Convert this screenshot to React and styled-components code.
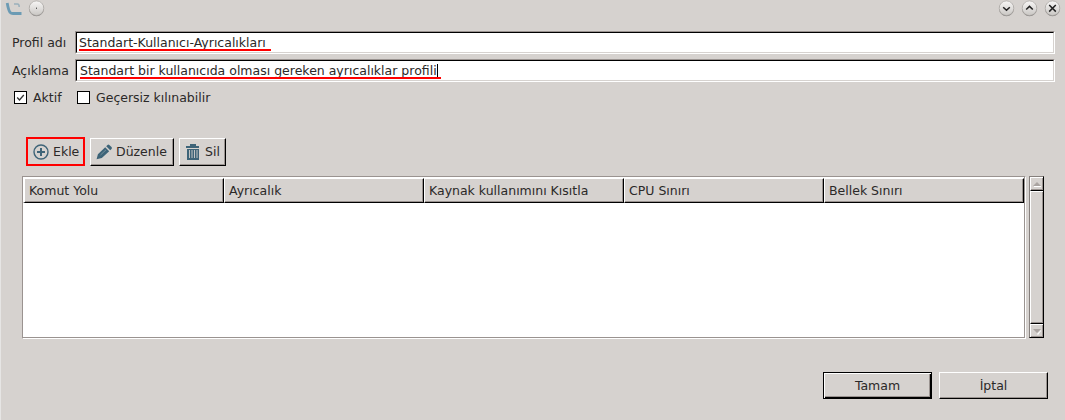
import React from "react";
import styled, { createGlobalStyle, css } from "styled-components";

const GlobalStyle = createGlobalStyle`
  * { box-sizing: border-box; }
  body { margin: 0; background: #d6d2cf; }
`;

const face = "#d6d2cf";
const shade = "#9a9390";

const Dialog = styled.main`
  width: 1065px;
  height: 420px;
  overflow: hidden;
  background: ${face};
  border-left: 1px solid #e6e5e4;
  font: 12.5px/16px "DejaVu Sans", sans-serif;
  color: #2b2928;
  white-space: nowrap;
`;

const TitleBar = styled.header`
  display: flex;
  align-items: flex-start;
  height: 31px;
  padding: 0 3px 0 4px;
`;

const Logo = styled.svg`
  width: 20px;
  height: 18px;
  margin-right: 3px;
`;

const Controls = styled.div`
  display: flex;
  gap: 5px;
  margin-left: auto;
`;

const RoundIcon = styled.svg`
  width: 18px;
  height: 18px;
`;

const Field = styled.label`
  display: flex;
  height: 23px;
  margin-bottom: 5px;
  padding: 0 10px 0 11px;
`;

const FieldName = styled.span`
  width: 63px;
  padding-top: 4px;
`;

const Input = styled.span`
  flex: 1;
  border: 1px solid;
  border-color: ${shade} #fff #fff ${shade};
  background: #fff;
`;

const InputInner = styled.span`
  display: block;
  height: 21px;
  padding: 2px 0 0 ${(p) => p.$indent}px;
  border: 1px solid;
  border-color: #000 ${face} ${face} #000;
`;

const Marked = styled.span`
  display: block;
  position: relative;
  width: max-content;
  height: 16px;
  &::after {
    content: "";
    position: absolute;
    left: 0;
    top: 14px;
    width: ${(p) => p.$length}px;
    height: 2px;
    background: #f00;
  }
`;

const Caret = styled.i`
  position: absolute;
  left: 357px;
  top: 1px;
  width: 1px;
  height: 14px;
  background: #000;
`;

const Options = styled.div`
  display: flex;
  align-items: center;
  height: 20px;
  padding-left: 13px;
`;

const Option = styled.label`
  display: flex;
  align-items: center;
  width: ${(p) => p.$width}px;
  gap: 6px;
  padding-top: 1px;
`;

const Box = styled.span`
  display: flex;
  width: 13px;
  height: 13px;
  margin-top: -1px;
  border: 1px solid #000;
  background: #fff;
`;

const raised = css`
  border: 1px solid;
  border-color: #fff #000 #000 #fff;
  box-shadow: inset -1px -1px ${shade};
  background: ${face};
`;

const Toolbar = styled.div`
  display: flex;
  gap: 5px;
  height: 29px;
  margin: 30px 0 10px 25px;
`;

const ToolButton = styled.button`
  ${raised}
  display: flex;
  align-items: center;
  width: ${(p) => p.$width}px;
  height: 28px;
  margin-top: 1px;
  padding: 0 0 0 5px;
  font: inherit;
  color: inherit;
  ${(p) =>
    p.$highlight &&
    css`
      height: 29px;
      margin-top: 0;
      border: 2px solid #f00;
      box-shadow: none;
    `}
  svg { width: 16px; height: 16px; margin-right: 4px; flex: none; }
`;

const Content = styled.div`
  display: flex;
  gap: 3px;
  height: 163px;
  padding-left: 21px;
`;

const Table = styled.section`
  width: 1004px;
  border: 1px solid;
  border-color: ${shade} #fff #fff ${shade};
  background: #fff;
`;

const TableInner = styled.div`
  height: 161px;
  padding-top: 1px;
  border-right: 1px solid ${shade};
  border-bottom: 1px solid ${shade};
`;

const HeaderRow = styled.div`
  display: grid;
  grid-template-columns: 201px repeat(4, 200px);
`;

const HeaderCell = styled.div`
  ${raised}
  height: 25px;
  padding: 4px 0 0 4px;
  &:first-child { border-left-width: 2px; }
`;

const ScrollBar = styled.div`
  display: flex;
  flex-direction: column;
  width: 15px;
  height: 162px;
  border: 1px solid;
  border-color: #857f7c #000 #000 #857f7c;
`;

const ScrollPart = styled.div`
  flex: ${(p) => (p.$thumb ? "1" : "0 0 14px")};
  border: solid;
  border-width: 1px 0 1px 1px;
  border-color: #fff #000 #000 #fff;
  box-shadow: inset -1px -1px ${shade};
  &:last-child { flex-basis: 13px; border-bottom: 0; }
  svg { display: block; width: 12px; height: 12px; }
`;

const Footer = styled.footer`
  display: flex;
  justify-content: flex-end;
  gap: 7px;
  padding: 33px 17px 0 0;
`;

const DialogButton = styled.button`
  ${raised}
  width: 109px;
  height: 27px;
  padding: 0;
  font: inherit;
  color: inherit;
  ${(p) =>
    p.$primary &&
    css`
      border-color: #000;
      box-shadow: inset 1px 1px #fff, inset -1px -1px #000, inset -2px -2px ${shade};
    `}
`;

function RoundButton({ children, id }) {
  return (
    <RoundIcon viewBox="0.5 0 18 18">
      <defs>
        <linearGradient id={id} x2="0" y2="1">
          <stop stopColor="#f8f7f6" />
          <stop offset="1" stopColor="#c9c6c3" />
        </linearGradient>
      </defs>
      <circle cx="9" cy="8.8" r="7.4" fill="#8d8987" />
      <circle cx="9" cy="8.2" r="7.3" fill={`url(#${id})`} stroke="#a6a3a0" strokeWidth=".6" />
      <g fill="none" stroke="#222" strokeWidth="1.5">{children}</g>
    </RoundIcon>
  );
}

const AddIcon = () => (
  <svg viewBox="0 0 16 16" fill="none" stroke="#3e6478">
    <circle cx="8" cy="8" r="7" strokeWidth="1.4" />
    <path d="M8 4v8M4 8h8" strokeWidth="2" />
  </svg>
);

const EditIcon = () => (
  <svg viewBox="0 0 16 16" fill="#3e6478">
    <path d="M.6 15.2l1.3-5 7.3-7 4 4-7.4 6.9zM10.2 2.2l1.3-1.3q.8-.8 1.8 0l2.2 2.2q.8.9 0 1.8L14.2 6.200z" />
    <path d="M4.500 11l5.500-5.200" stroke="#8ba0ab" strokeWidth=".7" />
  </svg>
);

const TrashIcon = () => (
  <svg viewBox="0 0 16 16" fill="#3e6478">
    <path d="M5 0h6v2h3v2H1V2h4zM2 5h12v11H2z" />
    <path d="M4.500 6v8M7 6v8M9.500 6v8M12 6v8" stroke="#c3c5c5" strokeWidth="1" />
  </svg>
);

const columns = ["Komut Yolu", "Ayrıcalık", "Kaynak kullanımını Kısıtla", "CPU Sınırı", "Bellek Sınırı"];

export default function App() {
  return (
    <>
      <GlobalStyle />
      <Dialog>
        <TitleBar>
          <Logo viewBox="0 0 20 18" fill="none">
            <path d="M2.200 3Q3.500 10.500 5.200 12.500Q6 13.500 8 13.500H16.500" stroke="#6c9bb4" strokeWidth="2.800" />
            <path d="M9 4h3.500q1.700 0 1.700 3" stroke="#9ab0bc" strokeWidth="1.500" />
          </Logo>
          <RoundButton id="menu"><path d="M8.500 8.200h1" strokeWidth="1" /></RoundButton>
          <Controls>
            <RoundButton id="down"><path d="M5.700 7.200L9 10.300l3.300-3.100" /></RoundButton>
            <RoundButton id="up"><path d="M5.700 9.500L9 6.400l3.300 3.100" /></RoundButton>
            <RoundButton id="close"><path d="M5.700 5l6.600 6.600M12.300 5l-6.600 6.600" /></RoundButton>
          </Controls>
        </TitleBar>
        <Field>
          <FieldName>Profil adı</FieldName>
          <Input><InputInner $indent={2}><Marked $length={192}>Standart-Kullanıcı-Ayrıcalıkları</Marked></InputInner></Input>
        </Field>
        <Field>
          <FieldName>Açıklama</FieldName>
          <Input><InputInner $indent={3}><Marked $length={361}>Standart bir kullanıcıda olması gereken ayrıcalıklar profili<Caret /></Marked></InputInner></Input>
        </Field>
        <Options>
          <Option $width={63}>
            <Box><svg width="11" height="11" viewBox="0 0 11 11" fill="none" stroke="#333" strokeWidth="1.3"><path d="M2.200 5.500L4.500 8l4.300-5" /></svg></Box>
            Aktif
          </Option>
          <Option $width={140}><Box />Geçersiz kılınabilir</Option>
        </Options>
        <Toolbar>
          <ToolButton $width={59} $highlight><AddIcon />Ekle</ToolButton>
          <ToolButton $width={84}><EditIcon />Düzenle</ToolButton>
          <ToolButton $width={47}><TrashIcon />Sil</ToolButton>
        </Toolbar>
        <Content>
          <Table>
            <TableInner>
              <HeaderRow>{columns.map((name) => <HeaderCell key={name}>{name}</HeaderCell>)}</HeaderRow>
            </TableInner>
          </Table>
          <ScrollBar>
            <ScrollPart><svg viewBox="0 0 12 12"><path d="M3 8h7v1H3z" fill="#fff" /><path d="M2 8l4-4 4 4z" fill="#aaa4a1" /></svg></ScrollPart>
            <ScrollPart $thumb />
            <ScrollPart><svg viewBox="0 0 12 12"><path d="M6 9l4-4v1L7 10z" fill="#fff" /><path d="M2 4h8L6 8z" fill="#aaa4a1" /></svg></ScrollPart>
          </ScrollBar>
        </Content>
        <Footer>
          <DialogButton $primary>Tamam</DialogButton>
          <DialogButton>İptal</DialogButton>
        </Footer>
      </Dialog>
    </>
  );
}
